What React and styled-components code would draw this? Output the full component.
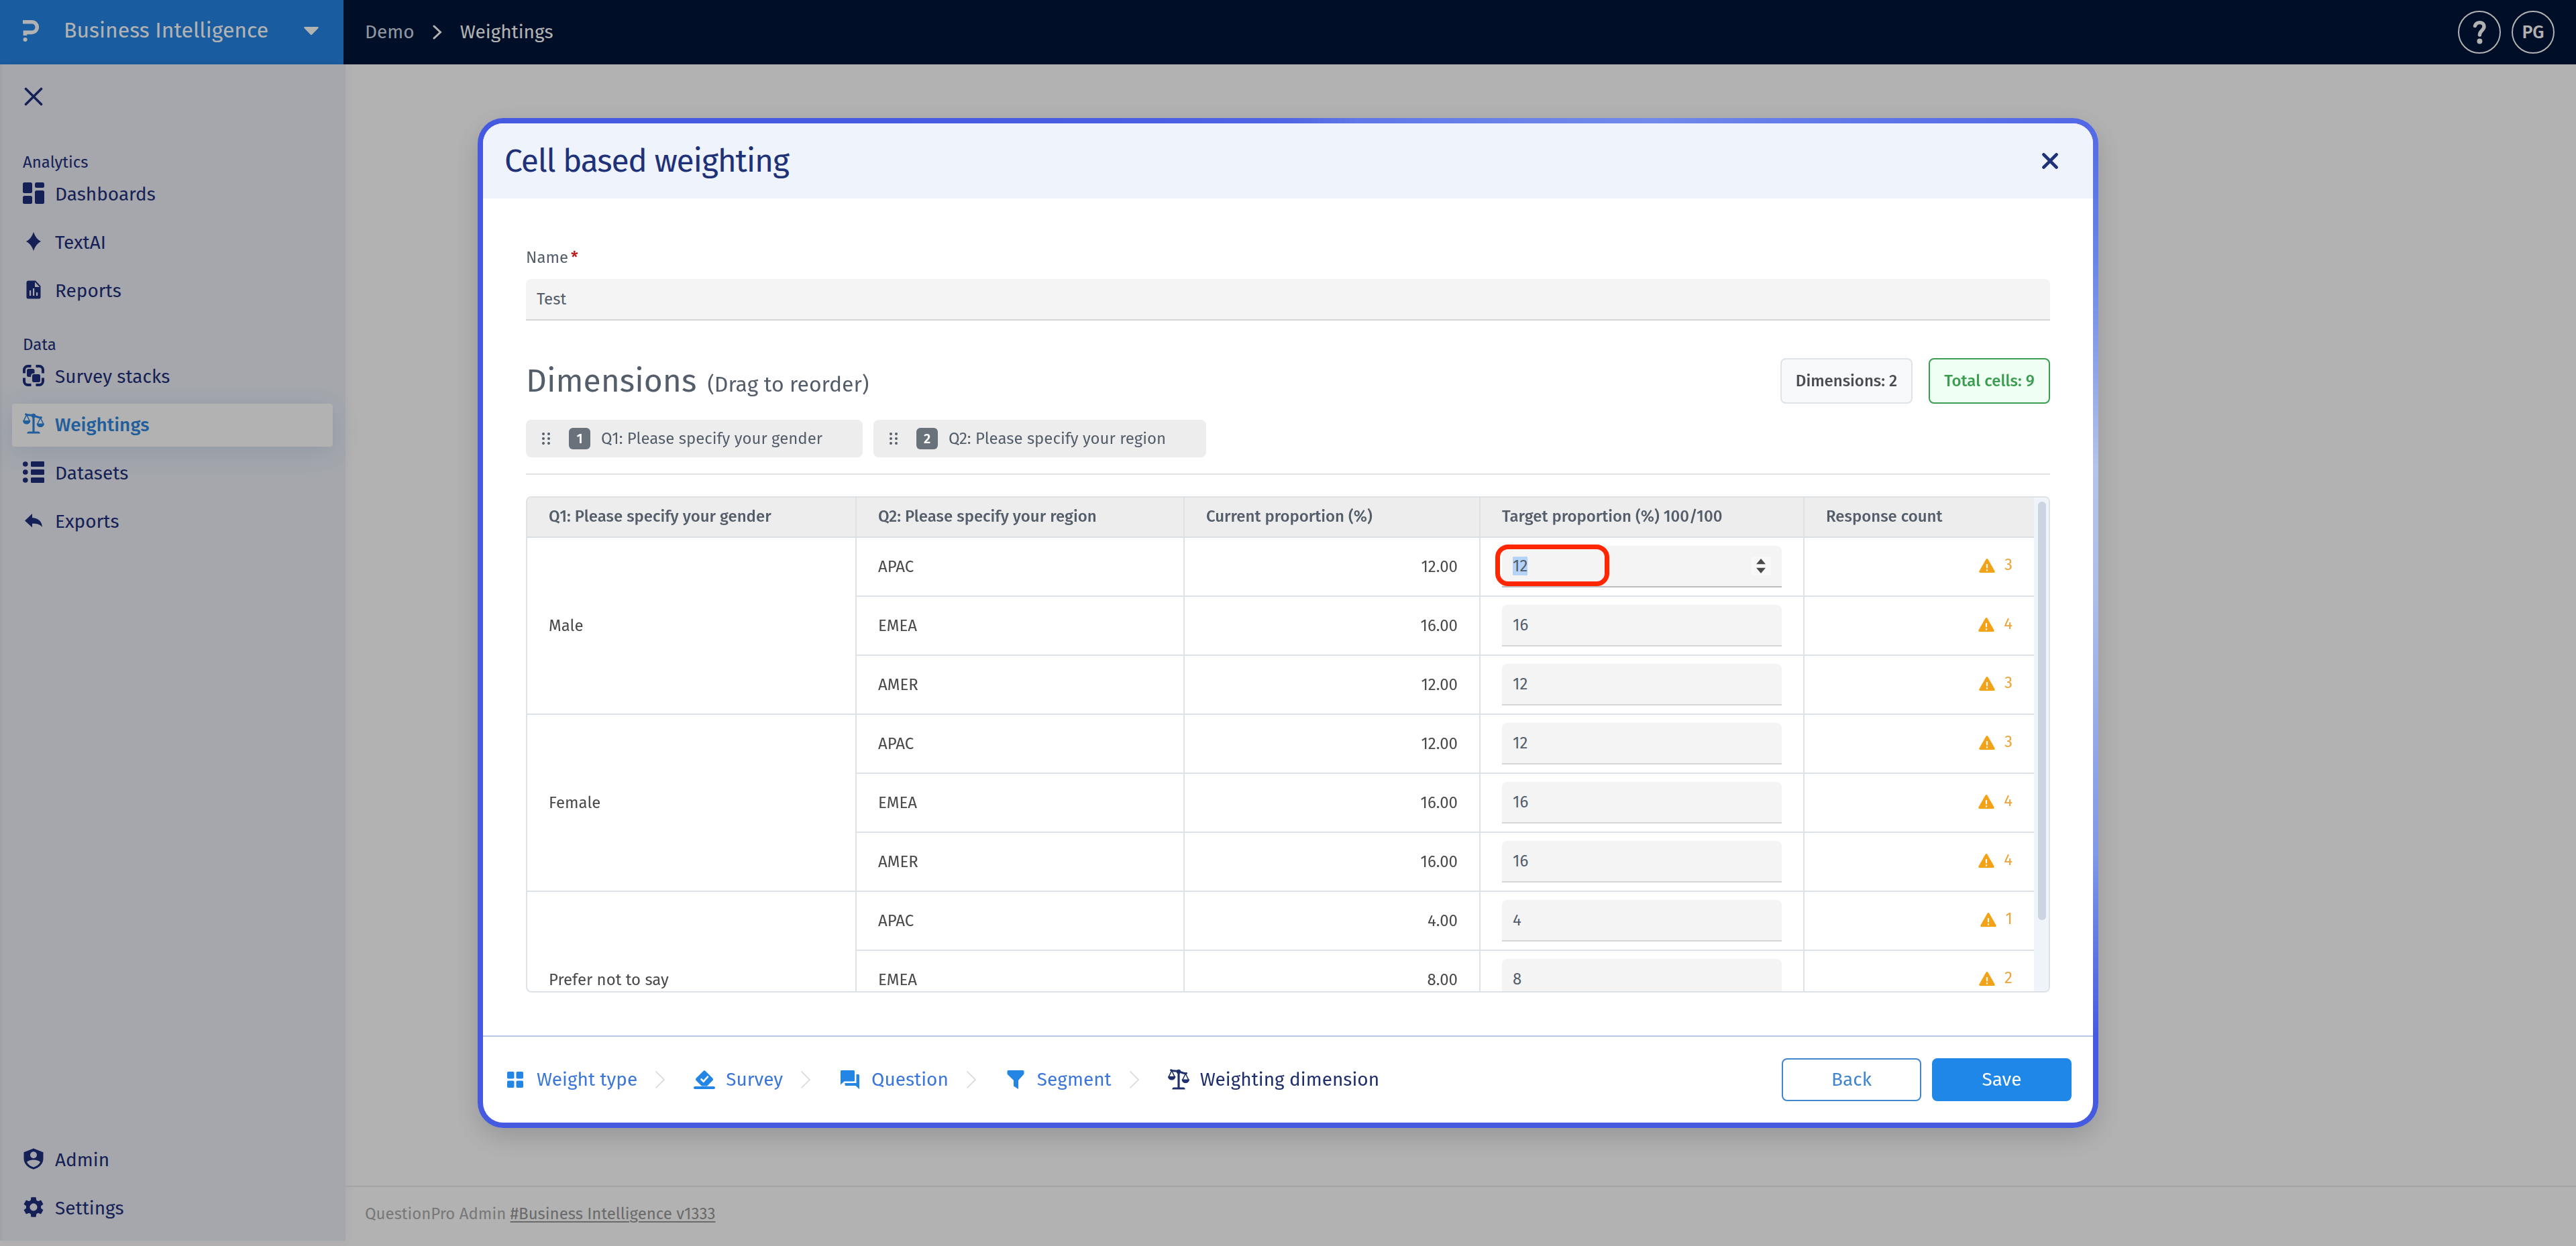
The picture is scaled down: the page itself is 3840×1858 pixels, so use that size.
import React from 'react';
import styled, { createGlobalStyle, css } from 'styled-components';

const GlobalStyle = createGlobalStyle`
  *, *::before, *::after { box-sizing: border-box; }
  html, body { margin: 0; padding: 0; background: #fff; }
  body {
    font-family: 'Fira Sans', 'Open Sans', 'Noto Sans', sans-serif;
    font-size: 24px;
    color: #545e6b;
    overflow: hidden;
  }
  h1, h2, p { margin: 0; font-weight: 400; }
`;

/* ---------- page shell ---------- */

const Page = styled.div`
  display: flex;
  flex-direction: column;
  height: 1858px;
  padding-bottom: 8px;
`;

const TopBar = styled.header`
  display: flex;
  height: 96px;
  background: #001539;
`;

const Brand = styled.div`
  display: flex;
  align-items: center;
  width: 512px;
  padding: 0 37px 4px 34px;
  background: #2685e5;
  color: #fff;
`;

const BrandName = styled.span`
  flex: 1;
  margin: 0 0 2px 37px;
  font-size: 32px;
`;

const Breadcrumb = styled.nav`
  display: flex;
  align-items: center;
  flex: 1;
  gap: 27px;
  padding: 0 0 1px 32px;
  font-size: 28px;
  color: #fff;
`;

const Crumb = styled.span`
  color: ${(p) => (p.$current ? '#fff' : '#ced9e6')};
`;

const TopActions = styled.div`
  display: flex;
  align-items: center;
  gap: 16px;
  padding-right: 32px;
`;

const RoundButton = styled.div`
  display: flex;
  align-items: center;
  justify-content: center;
  width: 64px;
  height: 64px;
  padding-bottom: ${(p) => (p.$text ? '1px' : 0)};
  border: 2px solid #fff;
  border-radius: 50%;
  color: #fff;
  font-size: 27px;
  font-weight: 500;
`;

const Columns = styled.div`
  display: flex;
  flex: 1;
  min-height: 0;
`;

const Sidebar = styled.aside`
  display: flex;
  flex-direction: column;
  width: 515px;
  padding: 34px 19px 16px 18px;
  background: #ecf0f7;
  box-shadow: 0 0 16px rgba(0, 0, 0, 0.05), inset 3px 0 3px rgba(0, 0, 0, 0.04);
  color: #1f2f7b;
`;

const CollapseButton = styled.div`
  display: flex;
  height: 28px;
  margin: 0 0 68px 18px;
`;

const GroupLabel = styled.div`
  height: 30px;
  margin: ${(p) => (p.$spaced ? '32px' : 0)} 0 2px 16px;
  line-height: 32px;
`;

const NavList = styled.div`
  display: flex;
  flex-direction: column;
  gap: 8px;
  margin-top: ${(p) => (p.$bottom ? 'auto' : 0)};
`;

const NavItem = styled.div`
  display: flex;
  align-items: center;
  gap: 16px;
  height: 64px;
  padding: 0 16px 4px;
  border-radius: 4px;
  font-size: 28px;
  ${(p) =>
    p.$active &&
    css`
      background: #fff;
      color: #2f87e0;
      font-weight: 500;
      box-shadow: 0 8px 40px rgba(70, 110, 200, 0.16);
    `}
`;

const NavLabel = styled.span`
  padding-top: 3px;
`;

const Content = styled.main`
  display: flex;
  flex: 1;
  flex-direction: column;
  justify-content: flex-end;
`;

const PageFooter = styled.footer`
  display: flex;
  align-items: center;
  height: 82px;
  padding: 0 29px;
  border-top: 2px solid #ebebeb;
  color: #adadad;
  white-space: pre;
`;

const VersionLink = styled.span`
  color: #999;
  text-decoration: underline;
  text-decoration-thickness: 2px;
  text-underline-offset: 3px;
`;

/* ---------- modal ---------- */

const Overlay = styled.div`
  position: fixed;
  inset: 0;
  display: flex;
  align-items: flex-start;
  justify-content: center;
  padding-top: 176px;
  background: rgba(0, 0, 0, 0.3);
`;

const Modal = styled.section`
  display: flex;
  flex-direction: column;
  width: 2416px;
  height: 1506px;
  padding: 8px;
  border-radius: 38px;
  background: conic-gradient(
    from 0deg,
    #4f65e4 0deg, #5f77e7 8deg, #7089ea 36deg, #5268e6 58deg, #6a86e8 66deg,
    #b4c3e9 79deg, #adbde9 88deg, #7f98e8 106deg, #465ae1 117deg,
    #465ae1 320deg, #4a5ee3 345deg, #4f65e4 360deg
  );
  box-shadow: 0 14px 40px rgba(0, 0, 0, 0.16);
`;

const ModalInner = styled.div`
  display: flex;
  flex: 1;
  flex-direction: column;
  overflow: hidden;
  border-radius: 30px;
  background: #fff;
`;

const ModalHeader = styled.div`
  display: flex;
  align-items: center;
  justify-content: space-between;
  height: 112px;
  padding: 0 52px 0 32px;
  background: #eef3fc;
  color: #1f3278;
`;

const ModalTitle = styled.h1`
  font-size: 48px;
  letter-spacing: -1.2px;
`;

const ModalBody = styled.div`
  display: flex;
  flex: 1;
  flex-direction: column;
  padding: 71px 64px 64px;
`;

const FieldLabel = styled.div`
  height: 32px;
  margin-bottom: 17px;
  line-height: 34px;
`;

const Required = styled.span`
  margin-left: 4px;
  color: #c01818;
  font-weight: 500;
`;

const Field = styled.div`
  position: relative;
  display: flex;
  align-items: center;
  justify-content: space-between;
  height: 62px;
  padding: 0 16px;
  border-bottom: 2px solid ${(p) => (p.$focused ? '#bcbcbc' : '#d6d6d6')};
  border-radius: 8px 8px 0 0;
  background: #f4f4f4;
  color: #545e6b;
`;

const SelectedText = styled.span`
  height: 28px;
  line-height: 29px;
  background: #b3d4f8;
`;

const Stepper = styled.span`
  display: flex;
  align-items: center;
  justify-content: center;
  width: 30px;
  height: 28px;
  background: #f8f8f8;
`;

const Highlight = styled.span`
  position: absolute;
  top: -2px;
  left: -10px;
  width: 170px;
  height: 62px;
  border: 7px solid #ff2600;
  border-radius: 19px;
`;

const DimensionsBar = styled.div`
  display: flex;
  align-items: center;
  height: 68px;
  margin-top: 56px;
`;

const SectionTitle = styled.h2`
  display: flex;
  align-items: baseline;
  flex: 1;
  gap: 16px;
  font-size: 48px;
`;

const SectionHint = styled.span`
  font-size: 32px;
`;

const Stat = styled.div`
  display: flex;
  align-items: center;
  justify-content: center;
  width: ${(p) => (p.$success ? 181 : 197)}px;
  height: 68px;
  margin-left: ${(p) => (p.$success ? 24 : 0)}px;
  border: 2px solid ${(p) => (p.$success ? '#3a9d50' : '#dfe2e6')};
  border-radius: 8px;
  background: ${(p) => (p.$success ? '#f0fff4' : '#f8f9fb')};
  color: ${(p) => (p.$success ? '#3a9d50' : '#494d52')};
  font-weight: 500;
`;

const ChipRow = styled.div`
  display: flex;
  gap: 16px;
  margin-top: 24px;
  padding-bottom: 24px;
  border-bottom: 2px solid #dfe1e3;
`;

const Chip = styled.div`
  display: flex;
  align-items: center;
  width: ${(p) => p.$width}px;
  height: 56px;
  padding: 0 24px;
  border-radius: 8px;
  background: #ededed;
`;

const ChipNumber = styled.span`
  display: flex;
  align-items: center;
  justify-content: center;
  width: 32px;
  height: 32px;
  margin: 0 16px 0 28px;
  border-radius: 6px;
  background: #69727b;
  color: #fff;
  font-size: 20px;
  font-weight: 600;
`;

/* ---------- table ---------- */

const TableFrame = styled.div`
  display: flex;
  height: 740px;
  margin-top: 32px;
  overflow: hidden;
  border: 2px solid #dfe2e5;
  border-radius: 8px;
`;

const Table = styled.table`
  width: 2246px;
  height: fit-content;
  table-layout: fixed;
  border-collapse: separate;
  border-spacing: 0;
`;

const Col = styled.col`
  width: ${(p) => p.$width}px;
`;

const HeadCell = styled.th`
  height: 60px;
  padding: 0 32px 2px;
  border-right: ${(p) => (p.$last ? 0 : '2px')} solid #dfe2e5;
  border-bottom: 2px solid #dbdfe4;
  background: #ededed;
  color: #545e6b;
  font-weight: 500;
  text-align: left;
  white-space: nowrap;
`;

const Cell = styled.td`
  height: 88px;
  padding: ${(p) => (p.$field ? '0 32px' : '0 32px 1px')};
  border-right: ${(p) => (p.$last ? 0 : '2px')} solid #dfe2e5;
  border-bottom: 2px solid #dfe2e5;
  color: #494949;
  text-align: ${(p) => (p.$right ? 'right' : 'left')};
`;

const ResponseCount = styled.span`
  display: flex;
  align-items: center;
  justify-content: flex-end;
  gap: 14px;
  padding-bottom: 6px;
  color: #eda43a;
  svg { margin-top: 3px; }
`;

const ScrollTrack = styled.div`
  flex: 1;
  padding: 6px 4px 0 6px;
  background: #eff3fa;
`;

const ScrollThumb = styled.div`
  width: 12px;
  height: 624px;
  border-radius: 6px;
  background: #cbd4e0;
`;

/* ---------- modal footer ---------- */

const ModalFooter = styled.div`
  display: flex;
  align-items: center;
  height: 130px;
  padding: 0 32px;
  border-top: 2px solid #bcc8e8;
`;

const Steps = styled.div`
  display: flex;
  align-items: center;
  flex: 1;
`;

const Step = styled.div`
  display: flex;
  align-items: center;
  gap: 16px;
  color: ${(p) => (p.$current ? '#1f2f6e' : '#2386e4')};
`;

const StepLabel = styled.span`
  padding-bottom: 1px;
  color: ${(p) => (p.$current ? '#1f2f6e' : '#3b76da')};
  font-size: 28px;
`;

const StepDivider = styled.span`
  display: flex;
  margin: 0 43px 0 27px;
  color: #d9d9d9;
`;

const Button = styled.div`
  display: flex;
  align-items: center;
  justify-content: center;
  width: 208px;
  height: 64px;
  margin-left: 16px;
  padding-bottom: 1px;
  border: 2px solid ${(p) => (p.$primary ? '#1f87e8' : '#3f86cf')};
  border-radius: 8px;
  background: ${(p) => (p.$primary ? '#1f87e8' : '#fff')};
  color: ${(p) => (p.$primary ? '#fff' : '#3f86cf')};
  font-size: 28px;
`;

/* ---------- icons ---------- */

const Icon = ({ w = 32, h = 32, box, children }) => (
  <svg width={w} height={h} viewBox={box || `0 0 ${w} ${h}`} fill="currentColor">
    {children}
  </svg>
);

const Logo = () => (
  <Icon w={24} h={32}>
    <path d="M0 2.8H13.5a7.6 7.6 0 0 1 0 15.600H3.400V23" fill="none" stroke="#fff" strokeWidth="5.600" />
    <circle cx="3.600" cy="29" r="3.100" />
  </Icon>
);

const Caret = () => (
  <Icon w={22} h={12}>
    <path d="M1.600 0h18.800c1.200 0 1.800 1.200 1 2l-9.200 9.400c-.7.8-1.700.8-2.400 0L.6 2c-.8-.8-.2-2 1-2z" />
  </Icon>
);

const Chevron = () => (
  <Icon w={14} h={22}>
    <path d="M2 2l9.500 9L2 20" fill="none" stroke="currentColor" strokeWidth="3" strokeLinecap="round" />
  </Icon>
);

const HelpGlyph = () => (
  <Icon w={22} h={36}>
    <path d="M4.500 8.500C5.800 4.600 9 3.600 11.400 3.600c4 0 6.600 2.600 6.600 6 0 5.400-6.600 6.400-6.600 12.400" fill="none" stroke="currentColor" strokeWidth="5.400" strokeLinecap="round" />
    <circle cx="11.400" cy="31.500" r="4" />
  </Icon>
);

const CloseThin = () => (
  <Icon w={28} h={28}>
    <path d="M2.500 2.500l23 23M25.500 2.500l-23 23" fill="none" stroke="currentColor" strokeWidth="3.600" strokeLinecap="round" />
  </Icon>
);

const CloseBold = () => (
  <Icon w={24} h={24}>
    <path d="M2.500 2.500l19 19M21.500 2.500l-19 19" fill="none" stroke="currentColor" strokeWidth="4.600" strokeLinecap="round" />
  </Icon>
);

const DashboardIcon = () => (
  <Icon>
    <rect width="14" height="16" rx="2.500" />
    <rect x="18" width="14" height="8" rx="2.500" />
    <rect y="20" width="14" height="12" rx="2.500" />
    <rect x="18" y="12" width="14" height="20" rx="2.500" />
  </Icon>
);

const SparkIcon = () => (
  <Icon>
    <path d="M16 2Q19.300 12.200 27 16 19.300 19.800 16 30 12.700 19.800 5 16 12.700 12.200 16 2z" />
  </Icon>
);

const ReportIcon = () => (
  <Icon>
    <path fillRule="evenodd" d="M8.500 2.500H19l7.500 8V27a2.500 2.500 0 0 1-2.500 2.500H8A2.500 2.500 0 0 1 5.500 27V5.500a3 3 0 0 1 3-3zM18 4.500V12h7zM10 17v8h2.200v-8zm5-3v11h2.200V14zm5 6v5h2.200v-5z" />
  </Icon>
);

const StacksIcon = () => (
  <Icon>
    <path d="M12.500 2H7.500A5.500 5.500 0 0 0 2 7.500v5M19.500 2h5A5.500 5.500 0 0 1 30 7.500v5M30 19.500v5a5.500 5.500 0 0 1-5.500 5.500h-5M12.500 30h-5A5.500 5.500 0 0 1 2 24.500v-5" fill="none" stroke="currentColor" strokeWidth="4" />
    <path d="M8.500 6h6.500a2.500 2.500 0 0 1 2.500 2.500v4.200h-1.300a4 4 0 0 0-4 4v1.300H8.500A2.500 2.500 0 0 1 6 15.500v-7A2.500 2.500 0 0 1 8.500 6z" />
    <rect x="14" y="14" width="12" height="12" rx="2.500" />
  </Icon>
);

const ScaleIcon = () => (
  <Icon>
    <g fill="none" stroke="currentColor">
      <path d="M4.500 1.800C8 4 11 2.200 16 3.600S22 7 27.500 6.500" strokeWidth="2.800" strokeLinecap="round" />
      <path d="M16 3v25" strokeWidth="3.200" />
      <path d="M5.600 2.500L1.200 11.800M5.600 2.500l4.600 9.300M26.300 7l-4.600 9.500M26.300 7l4.500 9.500" strokeWidth="1.600" />
    </g>
    <path d="M0 11h11.400c0 3.300-2.500 5.600-5.700 5.600S0 14.300 0 11zM20.600 15.500H32c0 3.300-2.500 5.600-5.700 5.600s-5.700-2.300-5.700-5.600z" />
    <path d="M9 27.400h14a2.600 2.600 0 0 1 2.600 2.600v.4H6.400V30A2.600 2.600 0 0 1 9 27.400z" />
    <circle cx="16" cy="4" r="3.200" />
  </Icon>
);

const ListIcon = () => (
  <Icon>
    <circle cx="3.800" cy="4" r="3.800" />
    <circle cx="3.800" cy="16" r="3.800" />
    <circle cx="3.800" cy="28" r="3.800" />
    <rect x="12" y="0" width="20" height="8" rx="1.200" />
    <rect x="12" y="12" width="20" height="8" rx="1.200" />
    <rect x="12" y="24" width="20" height="8" rx="1.200" />
  </Icon>
);

const ReplyIcon = () => (
  <Icon>
    <path d="M3 16.500L14 6v6c9 .6 14.500 5.500 15 14-3.800-4.400-8-5.300-15-5.200v5.700z" />
  </Icon>
);

const ShieldIcon = () => (
  <Icon>
    <path fillRule="evenodd" d="M16 0.500l14.500 5.800v9.200c0 7.700-5.500 13.700-14.500 16.200C7 29.200 1.500 23.200 1.500 15.500V6.300zM16 5.200a5 5 0 0 0 0 10 5 5 0 0 0 0-10zm0 12.300c-4.500 0-8.300 1.300-10 3.200 2 4.200 5.600 6.400 10 7.800 4.400-1.400 8-3.600 10-7.800-1.700-1.900-5.500-3.200-10-3.200z" />
  </Icon>
);

const GearIcon = () => (
  <Icon box="1.600 1.600 20.800 20.800">
    <path d="M19.140 12.940c.04-.3.06-.61.06-.94 0-.32-.02-.64-.07-.94l2.030-1.580c.18-.14.23-.41.12-.61l-1.920-3.320c-.12-.22-.37-.29-.59-.22l-2.390.96c-.5-.38-1.030-.7-1.620-.94l-.36-2.540c-.04-.24-.24-.41-.48-.41h-3.840c-.24 0-.43.17-.47.41l-.36 2.540c-.59.24-1.130.57-1.620.94l-2.390-.96c-.22-.08-.47 0-.59.22L2.740 8.870c-.12.21-.08.47.12.61l2.030 1.580c-.05.3-.09.63-.09.94s.02.64.07.94l-2.030 1.580c-.18.14-.23.41-.12.61l1.920 3.320c.12.22.37.29.59.22l2.390-.96c.5.38 1.030.7 1.620.94l.36 2.540c.05.24.24.41.48.41h3.840c.24 0 .44-.17.47-.41l.36-2.540c.59-.24 1.130-.56 1.620-.94l2.390.96c.22.08.47 0 .59-.22l1.920-3.320c.12-.22.07-.47-.12-.61l-2.010-1.580zM12 15.600c-1.980 0-3.600-1.620-3.600-3.600s1.620-3.600 3.600-3.600 3.600 1.620 3.600 3.600-1.620 3.600-3.600 3.600z" />
  </Icon>
);

const DragDots = () => (
  <Icon w={12} h={18}>
    {[2, 9, 16].map((y) => (
      <g key={y}>
        <circle cx="2" cy={y} r="2" />
        <circle cx="10" cy={y} r="2" />
      </g>
    ))}
  </Icon>
);

const StepperArrows = () => (
  <Icon w={16} h={24}>
    <path d="M8 1l7 8.200H1zM8 23l7-8.200H1z" fill="#4a4a4a" />
  </Icon>
);

const WarningIcon = () => (
  <Icon w={24} h={21}>
    <path fillRule="evenodd" d="M10.500 1a1.700 1.700 0 0 1 3 0l10 17.600a1.500 1.500 0 0 1-1.300 2.300H1.800a1.500 1.500 0 0 1-1.300-2.300zM10.900 8v6.300h2.200V8zm0 8.300v2.200h2.200v-2.200z" fill="#f3a116" />
  </Icon>
);

const GridIcon = () => (
  <Icon>
    <rect x="4" y="4" width="10.500" height="10.500" rx="1.800" />
    <rect x="17.500" y="4" width="10.500" height="10.500" rx="1.800" />
    <rect x="4" y="17.500" width="10.500" height="10.500" rx="1.800" />
    <rect x="17.500" y="17.500" width="10.500" height="10.500" rx="1.800" />
  </Icon>
);

const SurveyIcon = () => (
  <Icon>
    <path d="M14.300 3.200a2.300 2.300 0 0 1 3.400 0l10.600 10.600a2.300 2.300 0 0 1 0 3.400L20 25.500h-8l-8.300-8.300a2.300 2.300 0 0 1 0-3.400z" />
    <rect y="26" width="32" height="4" rx="2" />
    <path d="M11.500 15.500l3.200 3.200 6.300-7" fill="none" stroke="#fff" strokeWidth="2.600" strokeLinecap="round" />
  </Icon>
);

const ChatIcon = () => (
  <Icon>
    <path d="M4 2h17.500A1.500 1.500 0 0 1 23 3.500V17a1.500 1.500 0 0 1-1.500 1.500H7.500L2 23.500V3.500A1.500 1.500 0 0 1 4 2z" />
    <path d="M25.500 8H28.500A1.500 1.500 0 0 1 30 9.500V30l-5.500-5H10A1.500 1.500 0 0 1 8.500 23.500V21h17z" />
  </Icon>
);

const FunnelIcon = () => (
  <Icon>
    <path d="M5 2h22a1.500 1.500 0 0 1 1.500 1.500v3c0 .8-.3 1.300-.8 1.900L20 17v13l-7-4.500V17L4.300 8.400c-.5-.6-.8-1.100-.8-1.900v-3A1.500 1.500 0 0 1 5 2z" />
  </Icon>
);

const StepChevron = () => (
  <Icon w={14} h={28}>
    <path d="M0.500 1.500l12.500 12.500-12.500 12.500" fill="none" stroke="currentColor" strokeWidth="1.700" />
  </Icon>
);

/* ---------- data ---------- */

const analytics = [
  ['Dashboards', DashboardIcon],
  ['TextAI', SparkIcon],
  ['Reports', ReportIcon],
];
const dataItems = [
  ['Survey stacks', StacksIcon],
  ['Weightings', ScaleIcon],
  ['Datasets', ListIcon],
  ['Exports', ReplyIcon],
];
const adminItems = [
  ['Admin', ShieldIcon],
  ['Settings', GearIcon],
];

const groups = [
  { label: 'Male', rows: [['APAC', 12, 3], ['EMEA', 16, 4], ['AMER', 12, 3]] },
  { label: 'Female', rows: [['APAC', 12, 3], ['EMEA', 16, 4], ['AMER', 16, 4]] },
  { label: 'Prefer not to say', rows: [['APAC', 4, 1], ['EMEA', 8, 2]] },
];

const headings = [
  'Q1: Please specify your gender',
  'Q2: Please specify your region',
  'Current proportion (%)',
  'Target proportion (%) 100/100',
  'Response count',
];

const steps = [
  ['Weight type', GridIcon],
  ['Survey', SurveyIcon],
  ['Question', ChatIcon],
  ['Segment', FunnelIcon],
  ['Weighting dimension', ScaleIcon],
];

const NavGroup = ({ items, bottom }) => (
  <NavList $bottom={bottom}>
    {items.map(([label, Glyph]) => (
      <NavItem key={label} $active={label === 'Weightings'}>
        <Glyph />
        <NavLabel>{label}</NavLabel>
      </NavItem>
    ))}
  </NavList>
);

const TargetField = ({ value, focused }) =>
  focused ? (
    <Field $focused>
      <SelectedText>{value}</SelectedText>
      <Stepper>
        <StepperArrows />
      </Stepper>
      <Highlight />
    </Field>
  ) : (
    <Field>{value}</Field>
  );

export default function App() {
  return (
    <>
      <GlobalStyle />
      <Page>
        <TopBar>
          <Brand>
            <Logo />
            <BrandName>Business Intelligence</BrandName>
            <Caret />
          </Brand>
          <Breadcrumb>
            <Crumb>Demo</Crumb>
            <Chevron />
            <Crumb $current>Weightings</Crumb>
          </Breadcrumb>
          <TopActions>
            <RoundButton>
              <HelpGlyph />
            </RoundButton>
            <RoundButton $text>PG</RoundButton>
          </TopActions>
        </TopBar>
        <Columns>
          <Sidebar>
            <CollapseButton>
              <CloseThin />
            </CollapseButton>
            <GroupLabel>Analytics</GroupLabel>
            <NavGroup items={analytics} />
            <GroupLabel $spaced>Data</GroupLabel>
            <NavGroup items={dataItems} />
            <NavGroup items={adminItems} bottom />
          </Sidebar>
          <Content>
            <PageFooter>
              {'QuestionPro Admin '}
              <VersionLink>#Business Intelligence v1333</VersionLink>
            </PageFooter>
          </Content>
        </Columns>
      </Page>

      <Overlay>
        <Modal>
          <ModalInner>
            <ModalHeader>
              <ModalTitle>Cell based weighting</ModalTitle>
              <CloseBold />
            </ModalHeader>
            <ModalBody>
              <FieldLabel>
                Name<Required>*</Required>
              </FieldLabel>
              <Field>Test</Field>
              <DimensionsBar>
                <SectionTitle>
                  Dimensions <SectionHint>(Drag to reorder)</SectionHint>
                </SectionTitle>
                <Stat>Dimensions: 2</Stat>
                <Stat $success>Total cells: 9</Stat>
              </DimensionsBar>
              <ChipRow>
                <Chip $width={502}>
                  <DragDots />
                  <ChipNumber>1</ChipNumber>
                  <span>{headings[0]}</span>
                </Chip>
                <Chip $width={496}>
                  <DragDots />
                  <ChipNumber>2</ChipNumber>
                  <span>{headings[1]}</span>
                </Chip>
              </ChipRow>
              <TableFrame>
                <Table>
                  <colgroup>
                    {[491, 489, 441, 483, 342].map((w) => (
                      <Col key={w} $width={w} />
                    ))}
                  </colgroup>
                  <thead>
                    <tr>
                      {headings.map((h, i) => (
                        <HeadCell key={h} $last={i === 4}>
                          {h}
                        </HeadCell>
                      ))}
                    </tr>
                  </thead>
                  <tbody>
                    {groups.map((g, gi) =>
                      g.rows.map(([region, value, count], i) => (
                        <tr key={g.label + region}>
                          {i === 0 && <Cell rowSpan={3}>{g.label}</Cell>}
                          <Cell>{region}</Cell>
                          <Cell $right>{value.toFixed(2)}</Cell>
                          <Cell $field>
                            <TargetField value={value} focused={gi === 0 && i === 0} />
                          </Cell>
                          <Cell $last $right>
                            <ResponseCount>
                              <WarningIcon />
                              {count}
                            </ResponseCount>
                          </Cell>
                        </tr>
                      ))
                    )}
                    <tr>
                      <Cell colSpan={4} $last />
                    </tr>
                  </tbody>
                </Table>
                <ScrollTrack>
                  <ScrollThumb />
                </ScrollTrack>
              </TableFrame>
            </ModalBody>
            <ModalFooter>
              <Steps>
                {steps.map(([label, Glyph], i) => (
                  <React.Fragment key={label}>
                    {i > 0 && (
                      <StepDivider>
                        <StepChevron />
                      </StepDivider>
                    )}
                    <Step $current={i === 4}>
                      <Glyph />
                      <StepLabel $current={i === 4}>{label}</StepLabel>
                    </Step>
                  </React.Fragment>
                ))}
              </Steps>
              <Button>Back</Button>
              <Button $primary>Save</Button>
            </ModalFooter>
          </ModalInner>
        </Modal>
      </Overlay>
    </>
  );
}
